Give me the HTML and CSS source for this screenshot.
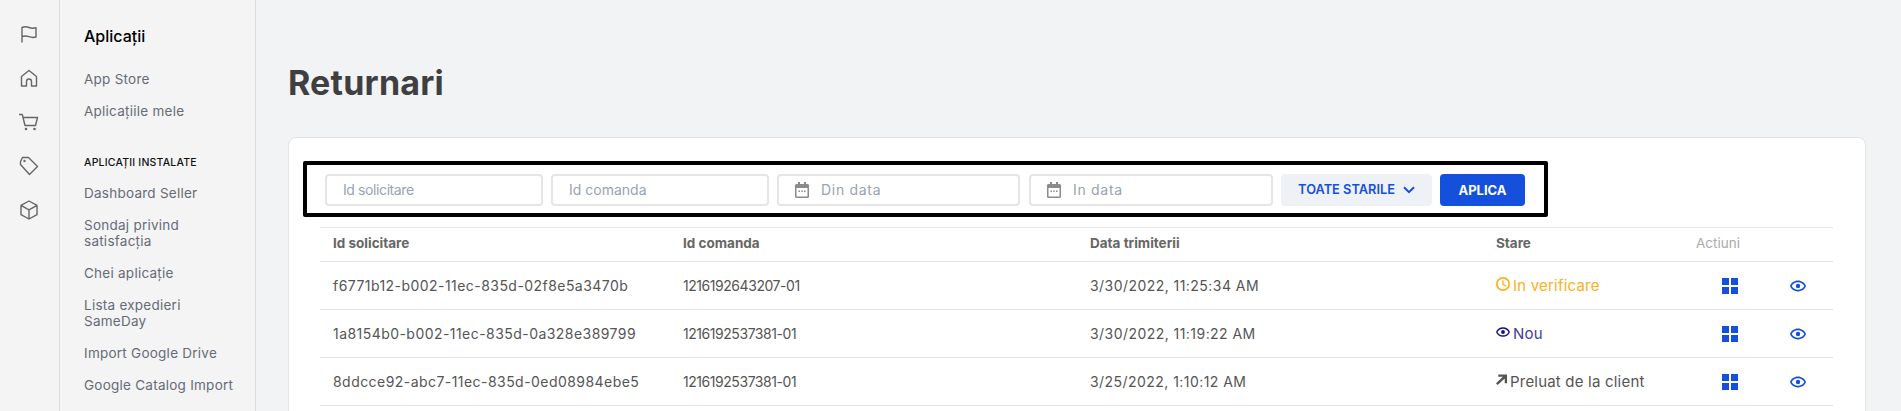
FILE: index.html
```html
<!DOCTYPE html>
<html lang="ro">
<head>
<meta charset="utf-8">
<title>Returnari</title>
<link rel="stylesheet" href="styles.css">
</head>
<body>
<div class="app">
  <nav class="rail">
    <svg class="rail-icon" viewBox="0 0 20 20"><path d="M3 18V3.500c2.500-1.200 4.500-1 7 0s4.500 1 7 .2V13c-2.500.8-4.500.6-7-.3s-4.500-1-7 0"/></svg>
    <svg class="rail-icon" viewBox="0 0 20 20"><path d="M2.500 18V8.500L10 2.500l7.500 6V18h-5v-4.500a2.500 2.500 0 0 0-5 0V18z"/></svg>
    <svg class="rail-icon" viewBox="0 0 20 20"><path d="M0.500 2.500h2.800L6 13.500h10.500L18.500 5.500H4"/><circle cx="7" cy="17" r=".6"/><circle cx="15.500" cy="17" r=".6"/></svg>
    <svg class="rail-icon" viewBox="0 0 20 20"><path d="M1.500 5.500 3.500 1.500 9.500 1.500 18.500 10.500 10.500 18.500 1.500 8.500z"/><circle cx="5.500" cy="5" r=".5"/></svg>
    <svg class="rail-icon" viewBox="0 0 20 20"><path d="M10 1 18 5.300v9.400L10 19l-8-4.300V5.300zM2 5.300l8 4.500 8-4.500M10 9.800V19"/></svg>
  </nav>
  <aside class="side">
    <h2 class="side-title">Aplicații</h2>
    <ul class="side-list">
      <li>App Store</li>
      <li>Aplicațiile mele</li>
    </ul>
    <h3 class="side-label">APLICAȚII INSTALATE</h3>
    <ul class="side-list">
      <li>Dashboard Seller</li>
      <li>Sondaj privind satisfacția</li>
      <li>Chei aplicație</li>
      <li>Lista expedieri SameDay</li>
      <li>Import Google Drive</li>
      <li>Google Catalog Import</li>
    </ul>
  </aside>
  <main class="main">
    <h1 class="title">Returnari</h1>
    <section class="card">
      <div class="filters">
        <div class="field w-id tight">Id solicitare</div>
        <div class="field w-id">Id comanda</div>
        <div class="field date w-d1"><svg class="cal" viewBox="0 0 14 16"><path d="M3 0h2v2h4V0h2v2h1.500A1.500 1.500 0 0 1 14 3.500v11a1.500 1.500 0 0 1-1.500 1.500h-11A1.500 1.500 0 0 1 0 14.500v-11A1.500 1.500 0 0 1 1.500 2H3zM1.500 6v8.500h11V6z"/><path d="M3.500 8.500h1.500V10H3.500zM6.300 8.500h1.500V10H6.300zM9 8.500h1.500V10H9z"/></svg>Din data</div>
        <div class="field date w-d2"><svg class="cal" viewBox="0 0 14 16"><path d="M3 0h2v2h4V0h2v2h1.500A1.500 1.500 0 0 1 14 3.500v11a1.500 1.500 0 0 1-1.500 1.500h-11A1.500 1.500 0 0 1 0 14.500v-11A1.500 1.500 0 0 1 1.500 2H3zM1.500 6v8.500h11V6z"/><path d="M3.500 8.500h1.500V10H3.500zM6.300 8.500h1.500V10H6.300zM9 8.500h1.500V10H9z"/></svg>In data</div>
        <div class="select">TOATE STARILE<svg class="chev" viewBox="0 0 12 8"><path d="M1 1.200 6 6.200l5-5"/></svg></div>
        <div class="apply">APLICA</div>
      </div>
      <div class="grid head">
        <div class="c1">Id solicitare</div>
        <div>Id comanda</div>
        <div>Data trimiterii</div>
        <div>Stare</div>
        <div class="actions-head">Actiuni</div>
      </div>
      <div class="grid row">
        <div class="c1">f6771b12-b002-11ec-835d-02f8e5a3470b</div>
        <div class="order">1216192643207-01</div>
        <div>3/30/2022, 11:25:34 AM</div>
        <div class="status amber"><svg viewBox="1.500 1.500 21 21"><path d="M12 1.500a10.500 10.500 0 1 0 0 21 10.500 10.500 0 0 0 0-21zm0 18.500a8 8 0 1 1 0-16 8 8 0 0 1 0 16zM13 6.500h-2v6.500l5.500 3.200 1-1.700-4.500-2.600z"/></svg>In verificare</div>
        <div class="act"><svg class="ico" viewBox="0 0 16 16"><path d="M0 0h7v7H0zM9 0h7v7H9zM0 9h7v7H0zM9 9h7v7H9z"/></svg></div>
        <div class="act"><svg class="ico" viewBox="1 1 22 22"><path d="M12 4.500C7 4.500 2.700 7.600 1 12c1.700 4.400 6 7.500 11 7.500s9.300-3.100 11-7.500c-1.700-4.400-6-7.500-11-7.500zm0 12.800c-3.800 0-7.100-2.100-8.700-5.300C4.900 8.800 8.200 6.700 12 6.700s7.100 2.100 8.700 5.300c-1.600 3.200-4.900 5.300-8.700 5.300zM12 9a3 3 0 1 0 0 6 3 3 0 0 0 0-6z"/></svg></div>
      </div>
      <div class="grid row">
        <div class="c1">1a8154b0-b002-11ec-835d-0a328e389799</div>
        <div class="order">1216192537381-01</div>
        <div>3/30/2022, 11:19:22 AM</div>
        <div class="status navy"><svg viewBox="1 1 22 22"><path d="M12 4.500C7 4.500 2.700 7.600 1 12c1.700 4.400 6 7.500 11 7.500s9.300-3.100 11-7.500c-1.700-4.400-6-7.500-11-7.500zm0 12.800c-3.800 0-7.100-2.100-8.700-5.300C4.900 8.800 8.200 6.700 12 6.700s7.100 2.100 8.700 5.300c-1.600 3.200-4.900 5.300-8.700 5.300zM12 9a3 3 0 1 0 0 6 3 3 0 0 0 0-6z"/></svg>Nou</div>
        <div class="act"><svg class="ico" viewBox="0 0 16 16"><path d="M0 0h7v7H0zM9 0h7v7H9zM0 9h7v7H0zM9 9h7v7H9z"/></svg></div>
        <div class="act"><svg class="ico" viewBox="1 1 22 22"><path d="M12 4.500C7 4.500 2.700 7.600 1 12c1.700 4.400 6 7.500 11 7.500s9.300-3.100 11-7.500c-1.700-4.400-6-7.500-11-7.500zm0 12.800c-3.800 0-7.100-2.100-8.700-5.300C4.900 8.800 8.200 6.700 12 6.700s7.100 2.100 8.700 5.300c-1.600 3.200-4.900 5.300-8.700 5.300zM12 9a3 3 0 1 0 0 6 3 3 0 0 0 0-6z"/></svg></div>
      </div>
      <div class="grid row">
        <div class="c1">8ddcce92-abc7-11ec-835d-0ed08984ebe5</div>
        <div class="order">1216192537381-01</div>
        <div>3/25/2022, 1:10:12 AM</div>
        <div class="status dark narrow"><svg viewBox="0 0 12 12"><path d="M2.500 0.500H12V10H9.500V4.800L1.800 12 0 10.200 7.500 3H2.500z"/></svg>Preluat de la client</div>
        <div class="act"><svg class="ico" viewBox="0 0 16 16"><path d="M0 0h7v7H0zM9 0h7v7H9zM0 9h7v7H0zM9 9h7v7H9z"/></svg></div>
        <div class="act"><svg class="ico" viewBox="1 1 22 22"><path d="M12 4.500C7 4.500 2.700 7.600 1 12c1.700 4.400 6 7.500 11 7.500s9.300-3.100 11-7.500c-1.700-4.400-6-7.500-11-7.500zm0 12.800c-3.800 0-7.100-2.100-8.700-5.300C4.900 8.800 8.200 6.700 12 6.700s7.100 2.100 8.700 5.300c-1.600 3.200-4.900 5.300-8.700 5.300zM12 9a3 3 0 1 0 0 6 3 3 0 0 0 0-6z"/></svg></div>
      </div>
    </section>
  </main>
</div>
</body>
</html>
```
FILE: styles.css
```css
* { box-sizing: border-box; }
html, body { margin: 0; height: 411px; overflow: hidden; }
body { font-family: Inter, "Noto Sans", sans-serif; font-size: 14px; color: #555; background: #f2f3f5; }
.app { display: flex; height: 411px; }

.rail { width: 60px; flex: none; border-right: 1px solid #ddd; background: #f4f4f5; display: flex; flex-direction: column; align-items: center; gap: 24px; padding: 24px 1px 0 0; }
.rail-icon { width: 20px; height: 20px; fill: none; stroke: #666; stroke-width: 1.4; stroke-linejoin: round; stroke-linecap: round; }

.side { width: 196px; flex: none; border-right: 1px solid #ddd; background: #f4f4f5; padding: 28px 20px 0 24px; }
.side-title { margin: 0 0 27px; font-size: 16px; line-height: 16px; font-weight: 500; color: #000; }
.side-list { list-style: none; margin: 0; padding: 0; display: flex; flex-direction: column; gap: 16px; }
.side-list li { line-height: 16px; font-size: 13.500px; letter-spacing: .25px; color: #666b75; }
.side-label { margin: 36px 0 14px; font-size: 10.500px; line-height: 16px; font-weight: 500; letter-spacing: .2px; color: #111; }

.main { flex: 1; padding: 0 35px 0 32px; min-width: 0; }
.title { margin: 0; padding-top: 62px; height: 137px; font-size: 34px; line-height: 42px; font-weight: 700; letter-spacing: .2px; color: #3f3f42; }

.card { background: #fff; border: 1px solid #e4e4e4; border-radius: 8px; padding: 23px 31px 0; height: 400px; }
.filters { margin-left: -17px; width: 1245px; height: 56px; border: 4px solid #000; border-radius: 2px; padding: 9px 0 0 18px; display: flex; }
.field { height: 32px; border: 2px solid #e5e5e5; border-radius: 4px; padding: 0 0 2px 16px; display: flex; align-items: center; color: #98a2b3; font-size: 14px; margin-right: 8px; }
.tight { letter-spacing: -.4px; }
.w-id { width: 218px; }
.w-d1 { width: 243px; margin-right: 9px; }
.w-d2 { width: 244px; }
.date { padding-left: 16px; letter-spacing: .7px; }
.cal { width: 14px; height: 16px; margin: 2px 12px 0 0; fill: #8a8a8a; flex: none; }
.select { width: 151px; height: 32px; border-radius: 4px; background: #eef2f7; color: #1550dc; font-size: 12.800px; font-weight: 600; display: flex; align-items: center; justify-content: center; gap: 8px; margin-right: 8px; padding-bottom: 1px; }
.chev { width: 12px; height: 8px; fill: none; stroke: #1550dc; stroke-width: 2; }
.apply { width: 85px; height: 32px; border-radius: 4px; background: #1550dc; color: #fff; font-size: 13px; font-weight: 700; display: flex; align-items: center; justify-content: center; padding-bottom: 1px; }

.grid { display: grid; grid-template-columns: 363px 407px 406px 200px 68px 69px; align-items: center; width: 1513px; border-bottom: 1px solid #e4e4e4; }
.head { height: 35px; margin-top: 10px; padding-bottom: 4px; border-top: 1px solid #e4e4e4; font-weight: 700; font-size: 13.500px; color: #666; }
.row { height: 48px; letter-spacing: .45px; padding-bottom: 1px; }
.c1 { padding-left: 13px; }
.order { letter-spacing: -.45px; }
.actions-head { font-weight: 400; color: #aaa; }
.status { display: flex; align-items: center; gap: 3px; font-size: 15px; letter-spacing: .2px; }
.status svg { width: 14px; height: 14px; flex: none; fill: currentColor; margin-top: -3px; }
.amber { color: #fdb01a; }
.navy { color: #3f3a9e; }
.navy svg { fill: #14107f; }
.dark { color: #555; }
.narrow svg { width: 11px; height: 11px; }
.act { padding-left: 26px; display: flex; }
.ico { width: 16px; height: 16px; fill: #1550dc; margin-top: 1px; }
```
